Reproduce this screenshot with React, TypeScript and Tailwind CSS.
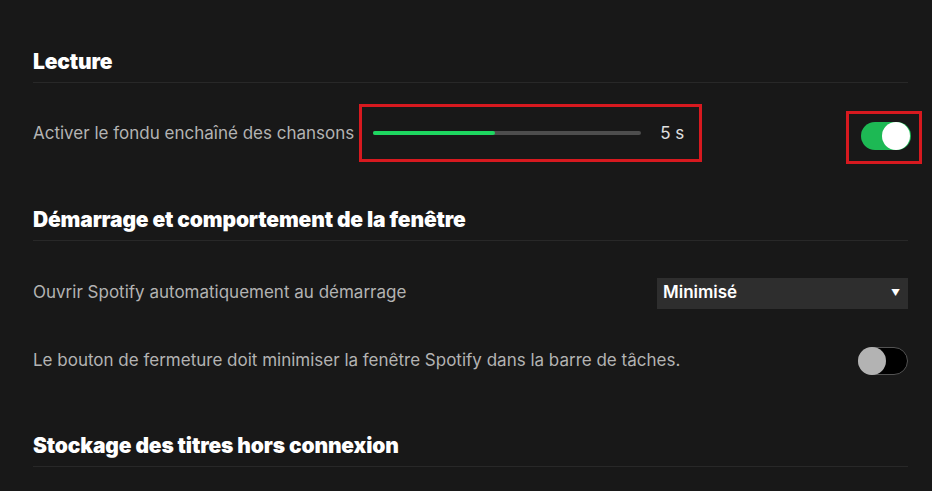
import React, { useState } from 'react';

function Toggle({ on, onChange }: { on: boolean; onChange: () => void }) {
  return (
    <button
      onClick={onChange}
      className={
        on
          ? 'relative h-[28px] w-[50px] rounded-full bg-[#1db954]'
          : 'relative h-[28px] w-[50px] rounded-full border border-[#535353] bg-black'
      }
    >
      <span
        className={
          on
            ? 'absolute right-[1px] top-[0px] h-[28px] w-[28px] rounded-full bg-white'
            : 'absolute left-[-1px] top-[-1px] h-[28px] w-[28px] rounded-full bg-[#b3b3b3]'
        }
      />
    </button>
  );
}

function SectionTitle({ children }: { children: React.ReactNode }) {
  return (
    <h2 className="h-[35px] border-b border-[#282828] text-[21px] font-black leading-[28px] tracking-[-0.15px] text-white">
      {children}
    </h2>
  );
}

export default function App() {
  const [crossfade, setCrossfade] = useState(true);
  const [closeMin, setCloseMin] = useState(false);

  return (
    <div
      className="min-h-[491px] bg-[#181818] pl-[33px] pr-[24px] pt-[48px] text-[17px]"
      style={{ fontFamily: 'Inter, "Liberation Sans", sans-serif' }}
    >
      <SectionTitle>Lecture</SectionTitle>

      <div className="mt-[21px] flex h-[58px] items-center">
        <span className="pt-[2px] text-[#b3b3b3]">Activer le fondu enchaîné des chansons</span>
        <div className="ml-[5px] flex h-[58px] w-[343px] items-center border-[3px] border-[#d7191f] pl-[11px]">
          <div className="h-[4px] w-[268px] rounded-full bg-[#4d4d4d]">
            <div className="h-[4px] w-[122px] rounded-full bg-[#1ed760]" />
          </div>
          <span className="ml-[19px] pt-[2px] text-[#e0e0e0]">5 s</span>
        </div>
        <div className="ml-auto mr-[-14px] mt-[9px] flex h-[53px] w-[76px] items-center border-[3px] border-[#d7191f] pb-[3px] pl-[12px]">
          <Toggle on={crossfade} onChange={() => setCrossfade(!crossfade)} />
        </div>
      </div>

      <div className="mt-[44px]">
        <SectionTitle>Démarrage et comportement de la fenêtre</SectionTitle>
      </div>

      <div className="mt-[32px] flex h-[40px] items-center">
        <span className="text-[#b3b3b3]">Ouvrir Spotify automatiquement au démarrage</span>
        <div className="ml-auto flex h-[31px] w-[251px] items-center justify-between bg-[#2e2e2e] pl-[6px] pr-[8px]">
          <span className="font-semibold text-white">Minimisé</span>
          <span className="text-[9px] text-white">▼</span>
        </div>
      </div>

      <div className="mt-[28px] flex h-[40px] items-center">
        <span className="text-[#b3b3b3]">
          Le bouton de fermeture doit minimiser la fenêtre Spotify dans la barre de tâches.
        </span>
        <div className="ml-auto flex items-center">
          <Toggle on={closeMin} onChange={() => setCloseMin(!closeMin)} />
        </div>
      </div>

      <div className="mt-[51px]">
        <SectionTitle>Stockage des titres hors connexion</SectionTitle>
      </div>
    </div>
  );
}
